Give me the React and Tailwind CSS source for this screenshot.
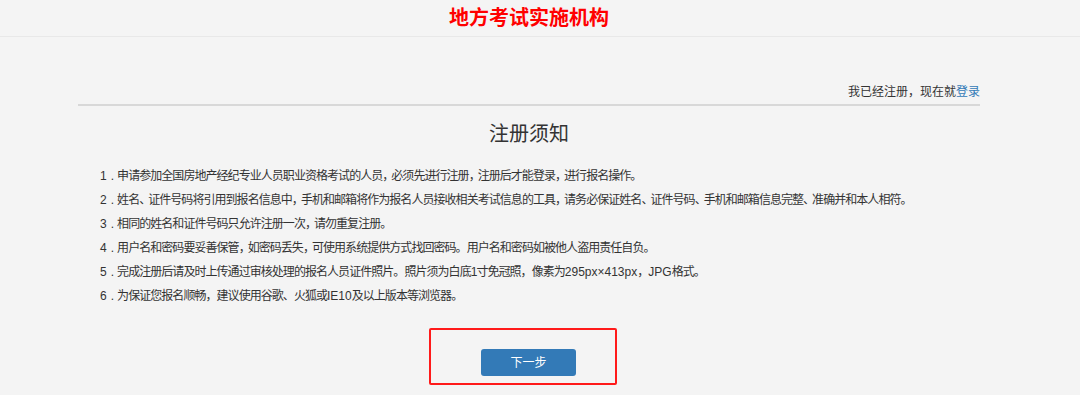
import React from 'react';

// narrower full-width punctuation, like the reference font
const Punct = ({ text }) =>
  text.split(/([，、])/).map((part, i) =>
    part === '，' || part === '、' ? (
      <span key={i} className="tracking-[-3px]">{part}</span>
    ) : (
      part
    )
  );

const rules = [
  <Punct text="申请参加全国房地产经纪专业人员职业资格考试的人员，必须先进行注册，注册后才能登录，进行报名操作。" />,
  <Punct text="姓名、证件号码将引用到报名信息中，手机和邮箱将作为报名人员接收相关考试信息的工具，请务必保证姓名、证件号码、手机和邮箱信息完整、准确并和本人相符。" />,
  <Punct text="相同的姓名和证件号码只允许注册一次，请勿重复注册。" />,
  <Punct text="用户名和密码要妥善保管，如密码丢失，可使用系统提供方式找回密码。用户名和密码如被他人盗用责任自负。" />,
  <>完成注册后请及时上传通过审核处理的报名人员证件照片。照片须为白底1寸免冠照，像素为<span className="tracking-normal">295px×413px</span>，<span className="tracking-normal">JPG</span>格式。</>,
  <>为保证您报名顺畅，建议使用谷歌、火狐或<span className="tracking-normal">IE10</span>及以上版本等浏览器。</>,
];

const App = () => {
  return (
    <div
      className="min-h-[395px] bg-[#f4f4f4] text-[#333]"
      style={{ fontFamily: '"Liberation Sans", "Noto Sans CJK SC", sans-serif' }}
    >
      {/* Header */}
      <div className="h-[37px] border-b border-[#e8e8e8] flex">
        <div className="ml-[78px] w-[902px] flex justify-center items-center">
          <h1 className="text-[20px] font-bold text-[#ff0000] leading-none">地方考试实施机构</h1>
        </div>
      </div>

      <div className="ml-[78px] w-[902px]">
        {/* Login link */}
        <div className="h-[69px] border-b-2 border-[#d8d8d8] flex items-end justify-end pb-[3px] text-[12px] text-[#333]">
          我已经注册，现在就<a className="text-[#337ab7]">登录</a>
        </div>

        <h2 className="text-center text-[20px] text-[#333] mt-[14px] leading-[28px]">注册须知</h2>

        <ul className="mt-[16px] pl-[22px] text-[12px] text-[#333] whitespace-nowrap tracking-[-0.95px]">
          {rules.map((r, i) => (
            <li key={i} className="leading-[24px]">
              <span className="tracking-normal">{i + 1}</span><span className="px-[4px]">.</span>{r}
            </li>
          ))}
        </ul>

        {/* Next button */}
        <div className="mt-[20px] flex">
          <div className="ml-[351px] w-[188px] h-[57px] border-2 border-[#ff1a1a] rounded-[2px] flex items-end pl-[50px] pb-[7px]">
            <button className="w-[95px] h-[27px] bg-[#337ab7] rounded-[3px] text-white text-[12px]">下一步</button>
          </div>
        </div>
      </div>
    </div>
  );
};

export default App;
